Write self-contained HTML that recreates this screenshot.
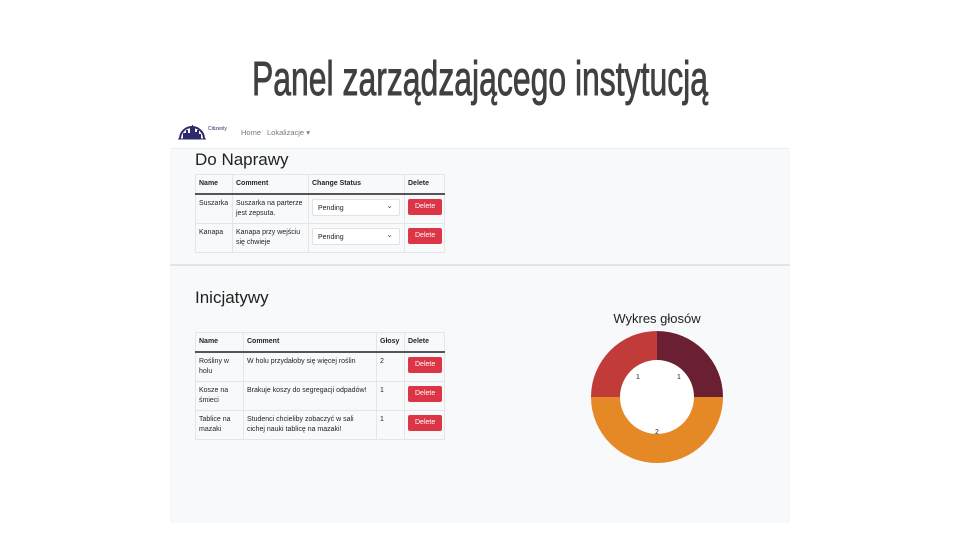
<!DOCTYPE html>
<html><head><meta charset="utf-8"><style>
*{margin:0;padding:0;box-sizing:border-box}
body{width:960px;height:540px;background:#fff;position:relative;overflow:hidden;font-family:"Liberation Sans",sans-serif;color:#212529}
.title{position:absolute;left:252px;top:52px;width:456px;height:56px;white-space:nowrap}
.title span{display:inline-block;font-family:"Liberation Sans Narrow","Liberation Sans",sans-serif;font-size:48px;font-weight:normal;-webkit-text-stroke:0.9px #404040;color:#404040;transform-origin:0 0;transform:scaleX(0.665);line-height:56px}
.shot{position:absolute;left:170px;top:118px;width:620px;height:405px;background:#f8f9fa}
.nav{position:absolute;left:0;top:0;width:620px;height:31px;background:#fff;border-bottom:1px solid #eceef0}
.nav .t{position:absolute;font-size:7.5px;color:#777;top:10px}
.h{position:absolute;font-size:17px;color:#222}
table{position:absolute;border-collapse:collapse;font-size:7px;background:#f8f9fa;table-layout:fixed}
td,th{border:1px solid #e3e5e8;padding:4px 3px;text-align:left;vertical-align:top;line-height:10px;height:29px}
th{font-weight:bold;border-bottom:2px solid #555;padding:4px 3px;height:18px}
.btn{display:inline-block;background:#dc3545;color:#fff;border-radius:2px;padding:4px 7px;font-size:7px;line-height:8px}
.sel{display:inline-block;width:88px;height:17px;background:#fff;border:1px solid #e2e2e2;border-radius:2px;font-size:7px;padding:4px 5px;position:relative}
.sel:after{content:"⌄";position:absolute;right:6px;top:1px;font-size:8px;color:#555}
.div{position:absolute;left:0;top:146px;width:620px;height:2px;background:#e2e4e7}
</style></head><body>
<div class="title"><span>Panel zarządzającego instytucją</span></div>
<div class="shot">
 <div class="nav">
  <svg style="position:absolute;left:8px;top:4px" width="28" height="18" viewBox="0 0 28 18">
   <path d="M2 17 A12 12 0 0 1 26 17" fill="none" stroke="#2e2a6e" stroke-width="2"/>
   <path d="M5 17 V11 H8 V8 H10 V11 H12 V6 H14 V3 H15 V6 H17 V10 H19 V8 H21 V12 H23 V17Z" fill="#2e2a6e"/>
   <line x1="0" y1="17" x2="28" y2="17" stroke="#2e2a6e" stroke-width="1"/>
  </svg>
  <div class="t" style="left:38px;top:8px;font-size:5px;color:#2e2a6e">Citizenly</div>
  <div class="t" style="left:71px">Home</div>
  <div class="t" style="left:97px">Lokalizacje ▾</div>
 </div>
 <div class="h" style="left:25px;top:32px">Do Naprawy</div>
 <table style="left:25px;top:56px;width:249px">
  <colgroup><col style="width:37px"><col style="width:76px"><col style="width:96px"><col style="width:40px"></colgroup>
  <tr><th>Name</th><th>Comment</th><th>Change Status</th><th>Delete</th></tr>
  <tr><td>Suszarka</td><td>Suszarka na parterze jest zepsuta.</td><td><span class="sel">Pending</span></td><td><span class="btn">Delete</span></td></tr>
  <tr><td>Kanapa</td><td>Kanapa przy wejściu się chwieje</td><td><span class="sel">Pending</span></td><td><span class="btn">Delete</span></td></tr>
 </table>
 <div class="div"></div>
 <div class="h" style="left:25px;top:170px">Inicjatywy</div>
 <table style="left:25px;top:214px;width:249px">
  <colgroup><col style="width:48px"><col style="width:133px"><col style="width:28px"><col style="width:40px"></colgroup>
  <tr><th>Name</th><th>Comment</th><th>Głosy</th><th>Delete</th></tr>
  <tr><td>Rośliny w holu</td><td>W holu przydałoby się więcej roślin</td><td>2</td><td><span class="btn">Delete</span></td></tr>
  <tr><td>Kosze na śmieci</td><td>Brakuje koszy do segregacji odpadów!</td><td>1</td><td><span class="btn">Delete</span></td></tr>
  <tr><td>Tablice na mazaki</td><td>Studenci chcieliby zobaczyć w sali cichej nauki tablicę na mazaki!</td><td>1</td><td><span class="btn">Delete</span></td></tr>
 </table>
 <div style="position:absolute;left:416px;top:193px;width:142px;text-align:center;font-size:13px;color:#222">Wykres głosów</div>
 <svg style="position:absolute;left:420px;top:212px" width="134" height="134" viewBox="0 0 134 134">
  <path d="M67 67 V1 A66 66 0 0 1 133 67Z" fill="#6a1f33"/>
  <path d="M67 67 H1 A66 66 0 0 1 67 1Z" fill="#c13c39"/>
  <path d="M67 67 H133 A66 66 0 0 1 1 67Z" fill="#e58926"/>
  <circle cx="67" cy="67" r="37" fill="#fff"/>
  <text x="46" y="49" font-size="7" font-family="Liberation Sans" fill="#222">1</text>
  <text x="87" y="49" font-size="7" font-family="Liberation Sans" fill="#222">1</text>
  <text x="65" y="104" font-size="7" font-family="Liberation Sans" fill="#222">2</text>
 </svg>
</div>
</body></html>
